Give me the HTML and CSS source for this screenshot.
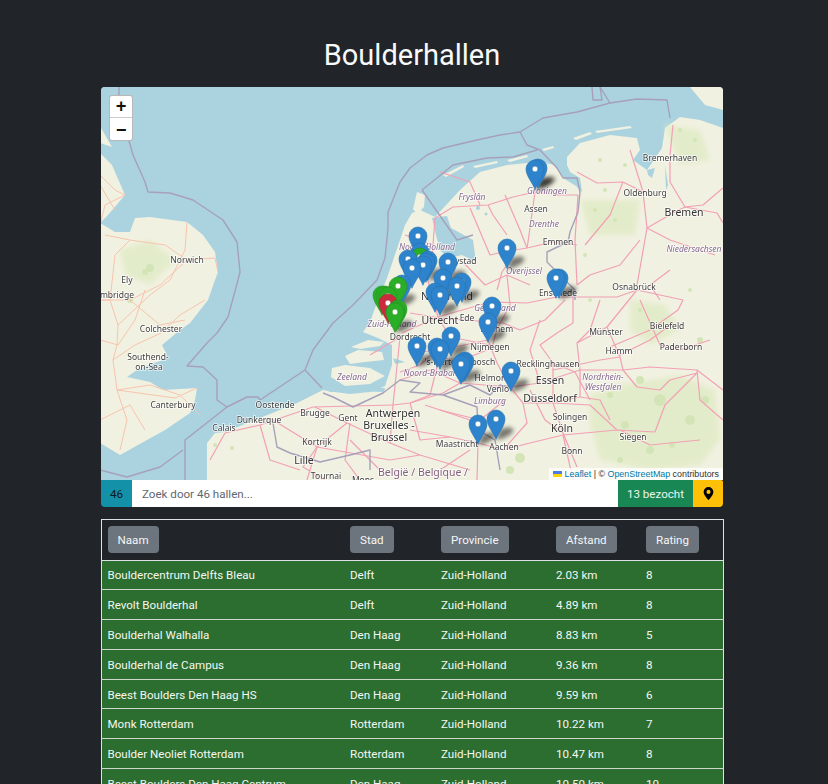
FILE: index.html
```html
<!DOCTYPE html>
<html lang="nl">
<head>
<meta charset="utf-8">
<title>Boulderhallen</title>
<link rel="stylesheet" href="styles.css">
</head>
<body>
<main class="page">
  <h1 class="title">Boulderhallen</h1>
  <section class="map">
    <svg class="map-art" viewBox="101 87 622 393" width="622" height="393" xmlns="http://www.w3.org/2000/svg">
      <defs>
        <filter id="soft" x="-20%" y="-20%" width="140%" height="140%"><feGaussianBlur stdDeviation="2"/></filter>
        <filter id="softer" x="-5%" y="-5%" width="110%" height="110%"><feGaussianBlur stdDeviation="2.5"/></filter>
        <path id="shadow" d="M0 20.5L4 10 14 8 18 11 14 16 6 20Z"/>
        <g id="pin">
          <path class="pin-body" d="M0 20.3C-2 14.5 -9 7 -9 0A9 9 0 0 1 9 0C9 7 2 14.5 0 20.3Z"/>
          <circle class="pin-dot" r="2.9"/>
        </g>
      </defs>
      <rect class="water" x="101" y="87" width="622" height="393"/>

      <g class="land">
        <path d="M101 128L112 147 100 143Z"/>
        <path d="M100 153L112 165 125 195 108 215 100 223Z"/>
        <path d="M100 223L115 232 130 232 135 218 150 217 187 222 203 235 215 252 218 272 215 280 208 300 190 323 180 330 162 345 167 355 163 360 140 368 127 377 150 382 163 390 197 388 195 400 190 413 165 430 120 455 100 443Z"/>
        <path d="M207 480L207 443 215 433 225 432 260 418 297 403 323 390 335 392 350 394 370 392 385 386 392 365 392 345 378 338 363 332 370 322 378 300 387 278 400 240 405 225 412 213 420 210 435 217 460 190 480 172 507 165 537 162 557 165 567 168 567 157 580 143 610 135 637 138 640 150 633 160 647 170 662 148 665 128 680 117 700 120 723 128 723 480Z"/>
        <path d="M690 87L723 87 723 110 705 105Z"/>
        <path d="M417 192L425 195 424 207 417 214 413 209Z"/>
        <path d="M331 377L332 368 345 365 370 368 385 376 370 384 345 386Z"/>
        <path d="M345 356L358 350 382 352 384 360 365 362 350 364Z"/>
        <path d="M351 347L368 340 384 342 380 346 360 349Z"/>
        <path d="M443 175L463 165 464 167 446 177Z"/>
        <path d="M473 166L497 161 498 163 475 168Z"/>
        <path d="M507 160L527 155 528 157 510 162Z"/>
        <path d="M542 149L553 146 554 148 544 151Z"/>
        <path d="M573 138L590 132 592 134 576 140Z"/>
        <path d="M595 131L630 126 632 128 597 133Z"/>
      </g>
      <g class="inland">
        <path d="M432 218L447 216 451 228 473 240 476 262 462 255 448 258 440 250 436 235Z"/>
        <path d="M553 163L567 165 570 172 580 178 582 192 576 186 563 178Z"/>
        <path d="M647 170L655 168 652 178 648 175Z"/>
        <path d="M665 165L668 185 666 190Z"/>
        <path d="M393 358L405 362 395 364Z"/>
        <path d="M140 368L165 376 150 380Z"/>
        <path d="M322 388L350 386 385 388 384 392 350 391 330 392Z"/>
        <circle cx="478" cy="208" r="2"/><circle cx="486" cy="214" r="1.5"/>
      </g>

      <g class="patch" filter="url(#softer)">
        <path d="M590 395L620 385 680 375 715 390 720 440 700 465 650 470 600 460 590 425Z"/>
        <path d="M630 300L665 305 680 330 650 345 630 330Z"/>
        <path d="M665 125L700 130 710 160 680 165Z"/>
        <path d="M580 200L640 200 635 235 590 235Z"/>
        <path d="M120 250L150 240 175 260 150 285 125 275Z"/>
      </g>
      <g class="green-dark">
        <circle cx="150" cy="268" r="4"/><circle cx="145" cy="272" r="3"/><circle cx="130" cy="300" r="3"/><circle cx="660" cy="400" r="6"/>
        <circle cx="640" cy="380" r="4"/><circle cx="690" cy="420" r="5"/><circle cx="625" cy="425" r="4"/><circle cx="610" cy="395" r="3"/>
        <circle cx="595" cy="210" r="2"/><circle cx="615" cy="220" r="2"/><circle cx="680" cy="130" r="2"/><circle cx="695" cy="140" r="2"/>
        <circle cx="650" cy="450" r="4"/><circle cx="510" cy="470" r="4"/><circle cx="520" cy="458" r="5"/><circle cx="585" cy="255" r="2"/>
        <circle cx="215" cy="445" r="2"/><circle cx="232" cy="448" r="2"/><circle cx="700" cy="340" r="3"/><circle cx="640" cy="310" r="2"/>
        <circle cx="600" cy="160" r="2"/><circle cx="625" cy="165" r="2"/><circle cx="605" cy="190" r="2"/><circle cx="705" cy="400" r="4"/>
        <circle cx="672" cy="445" r="3"/><circle cx="590" cy="300" r="2"/><circle cx="690" cy="290" r="2"/><circle cx="620" cy="460" r="3"/>
      </g>

      <g class="road-uk">
        <path d="M100 300L110 300 118 325 117 345 113 360 117 390 150 385 180 395 200 415"/>
        <path d="M117 390L127 420 120 450"/>
        <path d="M130 240L115 255 110 300"/>
        <path d="M187 222L185 250 170 280 150 295 118 325"/>
        <path d="M187 260L215 258 218 272"/>
        <path d="M187 260L165 245 130 240 105 235"/>
        <path d="M187 260L160 285 130 300"/>
        <path d="M100 300L130 300 160 325 185 320"/>
        <path d="M161 333L180 315 205 300"/>
        <path d="M161 333L135 345 113 360"/>
        <path d="M117 390L175 398 197 388"/>
        <path d="M100 175L115 190 125 195 105 205 100 225"/>
        <path d="M100 185L115 210"/>
        <path d="M100 340L118 345 135 320 145 290"/>
        <path d="M100 420L130 405 145 430"/>
      </g>
      <g class="road">
        <path d="M577 172L597 183 623 182 643 192 647 228 637 285"/>
        <path d="M647 228L673 213 685 207 703 205 723 188"/>
        <path d="M685 207L717 213 723 223"/>
        <path d="M673 125L670 155 670 182 685 207"/>
        <path d="M630 150L640 182 643 192"/>
        <path d="M578 195L575 240 577 285"/>
        <path d="M578 195L557 195 535 192 513 197 488 205 453 207 435 218"/>
        <path d="M435 218L433 245 432 262"/>
        <path d="M535 192L528 242 527 248 503 252 507 265 502 272 497 290"/>
        <path d="M527 248L553 242 577 245"/>
        <path d="M488 205L493 215 507 235"/>
        <path d="M470 208L490 255 503 252"/>
        <path d="M505 195L520 230 527 248"/>
        <path d="M440 172L470 182 480 205"/>
        <path d="M557 297L573 297 617 297 637 290 683 300 678 310 650 330 610 347"/>
        <path d="M573 297L573 323 557 333 540 345 553 363"/>
        <path d="M410 313L440 318 503 323 520 330"/>
        <path d="M510 387L540 383 580 370 623 370 650 367 697 370 723 390"/>
        <path d="M580 370L577 343 607 327 637 290"/>
        <path d="M607 327L620 357 623 370"/>
        <path d="M553 363L553 403 563 433 577 467"/>
        <path d="M510 387L523 403 550 403 580 397 580 370"/>
        <path d="M523 403L527 423 503 450"/>
        <path d="M503 450L530 443 563 435 617 430 655 432"/>
        <path d="M563 435L573 480"/>
        <path d="M478 443L450 437 410 430"/>
        <path d="M478 443L477 480"/>
        <path d="M478 443L503 450"/>
        <path d="M460 383L510 387"/>
        <path d="M460 383L443 393 410 403"/>
        <path d="M488 340L497 363 510 387"/>
        <path d="M410 353L440 350 488 340"/>
        <path d="M623 370L637 387 660 390 670 380 697 373"/>
        <path d="M673 323L650 340 620 355"/>
        <path d="M400 337L393 405 390 443"/>
        <path d="M225 433L260 425 313 407 393 405"/>
        <path d="M315 407L347 423 390 443 420 455 470 470"/>
        <path d="M347 423L317 447 303 467 325 480"/>
        <path d="M317 447L307 480"/>
        <path d="M273 420L317 447 390 460 420 455"/>
        <path d="M225 433L210 460"/>
        <path d="M393 405L410 403 430 395 440 355"/>
        <path d="M438 317L402 333"/>
        <path d="M438 317L450 337 420 365 400 372"/>
        <path d="M438 317L490 302 527 303"/>
        <path d="M438 317L425 270 430 250"/>
        <path d="M497 329L492 348 462 360 440 358"/>
        <path d="M497 329L510 305 507 275"/>
        <path d="M400 337L370 355"/>
        <path d="M433 245L405 235"/>
        <path d="M527 303L557 297"/>
        <path d="M553 370L600 360 620 357"/>
        <path d="M553 403L590 405 617 430"/>
        <path d="M530 390L545 420 563 433"/>
        <path d="M580 397L600 400 610 420"/>
        <path d="M400 380L430 370 460 383"/>
        <path d="M620 430L650 445 700 440"/>
        <path d="M565 300L545 320 520 330"/>
        <path d="M640 300L660 345 680 350 710 340"/>
        <path d="M350 423L345 460 360 480"/>
        <path d="M260 425L270 460 300 470"/>
        <path d="M505 400L480 420 440 410"/>
        <path d="M540 383L530 350 540 320"/>
        <path d="M553 363L575 372 590 400"/>
        <path d="M600 300L590 330 577 343"/>
        <path d="M623 182L610 215 585 245"/>
        <path d="M647 228L670 240 715 255"/>
        <path d="M640 240L620 265 590 275 577 285"/>
        <path d="M670 270L650 285 660 300"/>
        <path d="M697 370L700 400 723 420"/>
        <path d="M655 432L665 405 697 373"/>
        <path d="M463 262L485 285 507 275 530 285"/>
        <path d="M450 337L490 345"/>
        <path d="M410 403L420 440 450 437"/>
        <path d="M425 405L470 420"/>
        <path d="M350 440L380 470"/>
        <path d="M440 470L470 450"/>
      </g>
      <g class="border">
        <path d="M119 87L119 105 133 155 145 182 148 192 170 193 193 200 223 220 237 242 240 272 238 280 228 317 217 333 207 343 187 366 203 367 217 380 217 400 227 407 247 397 258 397 260 400 305 370 313 350 333 323 353 305 377 280 385 258 388 228 388 212 400 182 410 168 427 155 443 148 477 140 500 135 520 132 543 118 577 112 610 103 637 99 667 100 670 118"/>
        <path d="M227 407L185 440 185 480"/>
        <path d="M183 450L160 467 127 477 100 470"/>
        <path d="M305 370L322 388"/>
        <path d="M610 103L600 87M592 87L593 100 602 100 600 87"/>
        <path d="M520 132L527 145 540 150 557 168 563 178 577 178 580 192 578 212 570 232 568 242 547 252 547 262 557 272 575 290 575 300"/>
        <path d="M273 423L277 447 290 453 320 462 350 455 370 450 370 470"/>
        <path d="M323 393L333 397 353 407 383 393 400 380 420 383 410 392 443 395 477 407 478 430 495 440 500 470"/>
        <path d="M443 395L470 385 490 395 500 385 510 387"/>
        <path d="M422 190L432 182 453 165 487 158 513 157 537 150"/>
        <path d="M422 190L457 240 473 235"/>
      </g>
      <g class="city">
        <text x="670" y="161">Bremerhaven</text>
        <text x="187" y="263">Norwich</text>
        <text x="127" y="283">Ely</text>
        <text x="117" y="298">mbridge</text>
        <text x="161" y="332">Colchester</text>
        <text x="148" y="360">Southend-</text>
        <text x="149" y="370">on-Sea</text>
        <text x="173" y="408">Canterbury</text>
        <text x="224" y="431">Calais</text>
        <text x="259" y="423">Dunkerque</text>
        <text x="275" y="408">Oostende</text>
        <text x="315" y="416">Brugge</text>
        <text x="348" y="421">Gent</text>
        <text x="317" y="445">Kortrijk</text>
        <text x="326" y="479">Tournai</text>
        <text x="363" y="483">Mons</text>
        <text x="410" y="340">Dordrecht</text>
        <text x="460" y="365">'s-Hertogenbosch</text>
        <text x="467" y="321">Ede</text>
        <text x="497" y="332">Arnhem</text>
        <text x="490" y="350">Nijmegen</text>
        <text x="493" y="381">Helmond</text>
        <text x="498" y="392">Venlo</text>
        <text x="548" y="367">Recklinghausen</text>
        <text x="570" y="420">Solingen</text>
        <text x="572" y="454">Bonn</text>
        <text x="504" y="450">Aachen</text>
        <text x="457" y="447">Maastricht</text>
        <text x="633" y="440">Siegen</text>
        <text x="619" y="354">Hamm</text>
        <text x="606" y="335">Münster</text>
        <text x="667" y="329">Bielefeld</text>
        <text x="681" y="350">Paderborn</text>
        <text x="634" y="290">Osnabrück</text>
        <text x="558" y="296">Enschede</text>
        <text x="558" y="245">Emmen</text>
        <text x="536" y="212">Assen</text>
        <text x="645" y="196">Oldenburg</text>
        <text x="460" y="264">Lelystad</text>
      </g>
      <g class="city-big">
        <text x="304" y="464">Lille</text>
        <text x="393" y="417">Antwerpen</text>
        <text x="389" y="429">Bruxelles -</text>
        <text x="389" y="441">Brussel</text>
        <text x="440" y="324">Utrecht</text>
        <text x="447" y="300">Nederland</text>
        <text x="550" y="384">Essen</text>
        <text x="550" y="402">Düsseldorf</text>
        <text x="562" y="432">Köln</text>
        <text x="684" y="216">Bremen</text>
      </g>
      <g class="region">
        <text x="352" y="380">Zeeland</text>
        <text x="392" y="327">Zuid-Holland</text>
        <text x="432" y="376">Noord-Brabant</text>
        <text x="495" y="311">Gelderland</text>
        <text x="490" y="404">Limburg</text>
        <text x="603" y="380">Nordrhein-</text>
        <text x="603" y="390">Westfalen</text>
        <text x="694" y="252">Niedersachsen</text>
        <text x="544" y="227">Drenthe</text>
        <text x="547" y="194">Groningen</text>
        <text x="472" y="200">Fryslân</text>
        <text x="524" y="274">Overijssel</text>
        <text x="427" y="250">Noord-Holland</text>
      </g>
      <text class="country" x="423" y="476">België / Belgique /</text>

      <g class="shadows" filter="url(#soft)">
        <use href="#shadow" x="535" y="169"/><use href="#shadow" x="538" y="168"/><use href="#shadow" x="507" y="248"/>
        <use href="#shadow" x="559" y="278"/><use href="#shadow" x="428" y="260"/><use href="#shadow" x="448" y="262"/>
        <use href="#shadow" x="443" y="278"/><use href="#shadow" x="462" y="282"/><use href="#shadow" x="440" y="295"/>
        <use href="#shadow" x="398" y="286"/><use href="#shadow" x="395" y="312"/><use href="#shadow" x="492" y="306"/>
        <use href="#shadow" x="488" y="322"/><use href="#shadow" x="451" y="336"/><use href="#shadow" x="440" y="349"/>
        <use href="#shadow" x="417" y="346"/><use href="#shadow" x="463" y="362"/><use href="#shadow" x="511" y="371"/>
        <use href="#shadow" x="478" y="424"/><use href="#shadow" x="496" y="419"/>
      </g>

      <use href="#pin" class="blue" x="538" y="168"/>
      <use href="#pin" class="blue" x="535" y="169"/>
      <use href="#pin" class="blue" x="418" y="236"/>
      <use href="#pin" class="blue" x="507" y="248"/>
      <use href="#pin" class="blue" x="420" y="252"/>
      <use href="#pin" class="green" x="420" y="257"/>
      <use href="#pin" class="blue" x="408" y="259"/>
      <use href="#pin" class="blue" x="428" y="260"/>
      <use href="#pin" class="blue" x="426" y="262"/>
      <use href="#pin" class="blue" x="448" y="262"/>
      <use href="#pin" class="blue" x="423" y="265"/>
      <use href="#pin" class="blue" x="412" y="268"/>
      <use href="#pin" class="blue" x="559" y="278"/>
      <use href="#pin" class="blue" x="556" y="278"/>
      <use href="#pin" class="blue" x="443" y="278"/>
      <use href="#pin" class="blue" x="462" y="282"/>
      <use href="#pin" class="blue" x="457" y="286"/>
      <use href="#pin" class="blue" x="402" y="284"/>
      <use href="#pin" class="green" x="398" y="286"/>
      <use href="#pin" class="blue" x="435" y="292"/>
      <use href="#pin" class="blue" x="440" y="295"/>
      <use href="#pin" class="green" x="382" y="295"/>
      <use href="#pin" class="green" x="385" y="295"/>
      <use href="#pin" class="green" x="388" y="296"/>
      <use href="#pin" class="red" x="388" y="303"/>
      <use href="#pin" class="blue" x="492" y="306"/>
      <use href="#pin" class="green" x="398" y="309"/>
      <use href="#pin" class="green" x="396" y="311"/>
      <use href="#pin" class="green" x="395" y="312"/>
      <use href="#pin" class="blue" x="488" y="322"/>
      <use href="#pin" class="blue" x="451" y="336"/>
      <use href="#pin" class="blue" x="417" y="346"/>
      <use href="#pin" class="blue" x="437" y="347"/>
      <use href="#pin" class="blue" x="440" y="349"/>
      <use href="#pin" class="blue" x="465" y="361"/>
      <use href="#pin" class="blue" x="463" y="362"/>
      <use href="#pin" class="blue" x="461" y="364"/>
      <use href="#pin" class="blue" x="511" y="371"/>
      <use href="#pin" class="blue" x="496" y="419"/>
      <use href="#pin" class="blue" x="478" y="424"/>
    </svg>
    <div class="zoom-control">
      <a class="zoom-btn zoom-in">+</a>
      <a class="zoom-btn">−</a>
    </div>
    <div class="attribution"><svg class="flag" viewBox="0 0 12 8" xmlns="http://www.w3.org/2000/svg"><rect class="flag-top" width="12" height="4"/><rect class="flag-bottom" y="4" width="12" height="4"/></svg> <a class="attr-link">Leaflet</a> | © <a class="attr-link">OpenStreetMap</a> contributors</div>
  </section>

  <form class="search">
    <span class="search-count">46</span>
    <input class="search-input" type="text" placeholder="Zoek door 46 hallen...">
    <span class="search-visited">13 bezocht</span>
    <button class="search-locate" type="button" aria-label="Locatie">
      <svg viewBox="0 0 16 16" width="13" height="13" xmlns="http://www.w3.org/2000/svg"><path d="M8 16s6-5.7 6-10A6 6 0 0 0 2 6c0 4.3 6 10 6 10zm0-7.5a2.5 2.5 0 1 1 0-5 2.5 2.5 0 0 1 0 5z"/></svg>
    </button>
  </form>

  <table class="halls">
    <colgroup><col class="c-name"><col class="c-city"><col class="c-prov"><col class="c-dist"><col class="c-rate"></colgroup>
    <thead>
      <tr><th><button class="sort" type="button">Naam</button></th><th><button class="sort" type="button">Stad</button></th><th><button class="sort" type="button">Provincie</button></th><th><button class="sort" type="button">Afstand</button></th><th><button class="sort" type="button">Rating</button></th></tr>
    </thead>
    <tbody>
      <tr><td>Bouldercentrum Delfts Bleau</td><td>Delft</td><td>Zuid-Holland</td><td>2.03 km</td><td>8</td></tr>
      <tr><td>Revolt Boulderhal</td><td>Delft</td><td>Zuid-Holland</td><td>4.89 km</td><td>8</td></tr>
      <tr><td>Boulderhal Walhalla</td><td>Den Haag</td><td>Zuid-Holland</td><td>8.83 km</td><td>5</td></tr>
      <tr><td>Boulderhal de Campus</td><td>Den Haag</td><td>Zuid-Holland</td><td>9.36 km</td><td>8</td></tr>
      <tr><td>Beest Boulders Den Haag HS</td><td>Den Haag</td><td>Zuid-Holland</td><td>9.59 km</td><td>6</td></tr>
      <tr><td>Monk Rotterdam</td><td>Rotterdam</td><td>Zuid-Holland</td><td>10.22 km</td><td>7</td></tr>
      <tr><td>Boulder Neoliet Rotterdam</td><td>Rotterdam</td><td>Zuid-Holland</td><td>10.47 km</td><td>8</td></tr>
      <tr><td>Beest Boulders Den Haag Centrum</td><td>Den Haag</td><td>Zuid-Holland</td><td>10.50 km</td><td>10</td></tr>
    </tbody>
  </table>
</main>
</body>
</html>
```
FILE: styles.css
```css
html { overflow: hidden; }
* { box-sizing: border-box; }
body {
  margin: 0;
  background: #212529;
  color: #f8f9fa;
  font-family: "Roboto", "Open Sans", sans-serif;
  font-size: 11.6px;
}
.page { width: 622px; margin: 0 auto 0 101px; padding-top: 37px; }
.title {
  margin: 0 0 14px;
  height: 36px;
  line-height: 36px;
  text-align: center;
  font-size: 29px;
  font-weight: 400;
  color: #f8f9fa;
}

.map { position: relative; height: 393px; border-radius: 4px 4px 0 0; overflow: hidden; background: #aad3df; }
.map-art { display: block; filter: blur(0.35px); }
.water { fill: #aad3df; }
.land path { fill: #f1f1e1; }
.patch path { fill: #e3ecca; }
.green-dark circle { fill: #d3e5b6; }
.inland path, .inland circle { fill: #aad3df; }
.road path, .road-uk path, .border path { fill: none; stroke-linejoin: round; }
.road path { stroke: #f2a0b4; stroke-width: 1.2; }
.road-uk path { stroke: #f8c4ae; stroke-width: 1; }
.border path { stroke: #a7a0ba; stroke-width: 1.4; }
.city text, .city-big text, .region text, .country {
  font-family: "Noto Sans", "Open Sans", sans-serif;
  text-anchor: middle;
  paint-order: stroke;
  stroke: rgba(255, 255, 255, 0.75);
  stroke-width: 1.6px;
}
.city text { font-size: 8.5px; fill: #3d3d3d; }
.city-big text { font-size: 10.5px; fill: #333; }
.region text { font-size: 8.5px; font-style: italic; fill: #84688d; }
.country { font-size: 10.5px; fill: #84607f; }
.shadows use { fill: rgba(0, 0, 0, 0.5); }
.pin-dot { fill: #fff; }
.blue { fill: #2d83cc; stroke: #2670ae; stroke-width: 0.6; }
.green { fill: #2aad27; stroke: #24951f; stroke-width: 0.6; }
.red { fill: #cb2b3e; stroke: #b02636; stroke-width: 0.6; }

.zoom-control {
  position: absolute;
  left: 8px;
  top: 8px;
  width: 24px;
  border: 1px solid rgba(0, 0, 0, 0.28);
  border-radius: 3px;
  background: #fff;
  display: flex;
  flex-direction: column;
}
.zoom-btn {
  height: 22px;
  display: flex;
  align-items: center;
  justify-content: center;
  font-family: "DejaVu Sans Mono", "Liberation Mono", monospace;
  font-size: 17px;
  font-weight: 700;
  color: #111;
  line-height: 1;
}
.zoom-in { border-bottom: 1px solid #ccc; }
.attribution {
  position: absolute;
  right: 0;
  bottom: 0;
  height: 12px;
  padding: 0 4px;
  background: rgba(255, 255, 255, 0.8);
  color: #333;
  font-family: "Liberation Sans", Arial, sans-serif;
  font-size: 8.9px;
  line-height: 12px;
  white-space: nowrap;
}
.flag { width: 9px; height: 6px; }
.flag-top { fill: #4c7be1; }
.flag-bottom { fill: #ffd500; }
.attr-link { color: #0078a8; }

.search { display: flex; height: 27px; margin: 0; }
.search-count {
  width: 31px;
  display: flex;
  align-items: center;
  justify-content: center;
  background: #1391a9;
  color: #101820;
  border-radius: 0 0 0 4px;
}
.search-input {
  flex: 1;
  min-width: 0;
  border: 0;
  padding: 0 10px;
  background: #fff;
  font: inherit;
  outline: 0;
}
.search-input::placeholder { color: #5f676e; opacity: 1; }
.search-visited {
  width: 75px;
  display: flex;
  align-items: center;
  justify-content: center;
  background: #198754;
  color: #eaf5ef;
}
.search-locate {
  width: 30px;
  padding: 0;
  border: 0;
  display: flex;
  align-items: center;
  justify-content: center;
  background: #ffc107;
  border-radius: 0 2px 4px 0;
}

.halls {
  width: 622px;
  margin-top: 12px;
  border-collapse: collapse;
  table-layout: fixed;
  border: 1px solid #dee2e6;
  color: #f4f7f4;
}
.c-name { width: 243px; }
.c-city { width: 91px; }
.c-prov { width: 115px; }
.c-dist { width: 90px; }
.c-rate { width: 83px; }
.halls th {
  height: 40.5px;
  padding: 0 6px 0 5.5px;
  text-align: left;
  font-weight: 400;
  border-bottom: 1px solid #dee2e6;
}
.halls td {
  height: 29.8px;
  padding: 1px 6px 0 5.5px;
  background: #2c6e2f;
  border-bottom: 1px solid #cfd8cf;
  white-space: nowrap;
}
.sort {
  display: inline-block;
  height: 27px;
  padding: 0 10px;
  border: 0;
  border-radius: 4px;
  background: #6c757d;
  color: #f5f6f7;
  font: inherit;
}
```
